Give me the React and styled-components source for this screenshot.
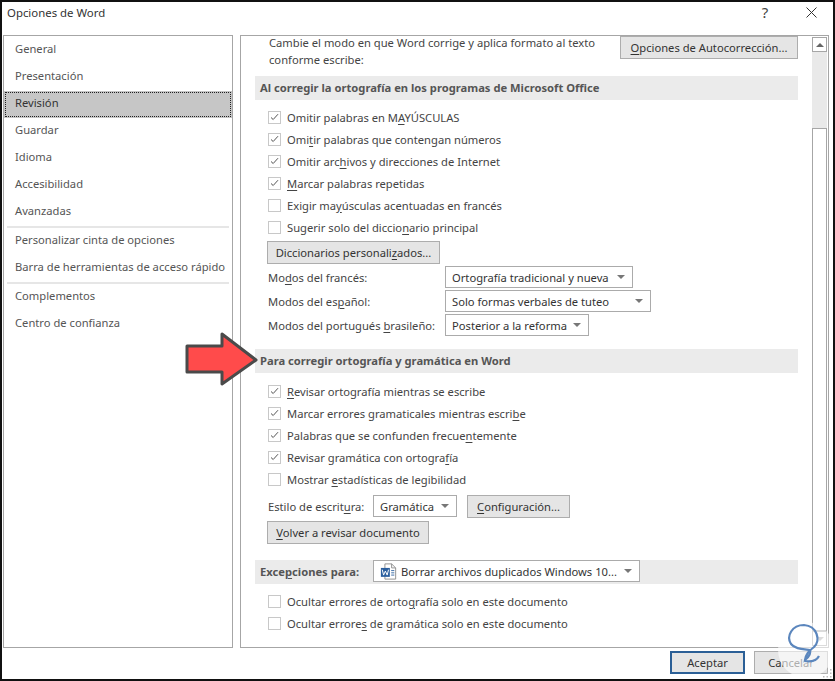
import React from "react";
import styled, { createGlobalStyle } from "styled-components";

const GlobalStyle = createGlobalStyle`
  html, body {
    margin: 0;
    padding: 0;
    background: #fff;
  }
  * {
    box-sizing: border-box;
  }
  u {
    text-underline-offset: 2px;
    text-decoration-thickness: 1px;
  }
`;

const Dialog = styled.div`
  position: relative;
  width: 835px;
  height: 681px;
  overflow: hidden;
  display: flex;
  flex-direction: column;
  background: #fff;
  border: 2px solid #111;
  font-family: "Noto Sans", "Open Sans", sans-serif;
  font-size: 11.2px;
  color: #444;
`;

const TitleBar = styled.div`
  height: 33px;
  flex: none;
  display: flex;
  align-items: center;
  padding: 0 16px 13px 5px;
  color: #333;
  font-size: 11.4px;
`;

const Title = styled.div`
  flex: 1;
`;

const HelpMark = styled.span`
  width: 20px;
  margin-right: 31px;
  text-align: center;
  font-size: 15px;
  color: #444;
`;

const Body = styled.div`
  flex: 1;
  min-height: 0;
  display: flex;
  gap: 7px;
  padding: 0 4px 0 1px;
`;

const Sidebar = styled.nav`
  width: 230px;
  border: 1px solid #a6a6a6;
  padding-top: 1px;
  flex: none;
`;

const NavItem = styled.div`
  height: 27px;
  line-height: 24px;
  padding-left: 11px;
  color: #555;
  white-space: nowrap;
  ${(p) =>
    p.$active &&
    `
    background: #c6c6c6;
    color: #333;
    outline: 1px dotted #222;
    outline-offset: -2px;
  `}
`;

const NavRule = styled.div`
  height: 2px;
  margin: ${(p) => p.$margin};
  background: #e6e6e6;
`;

const Panel = styled.main`
  flex: 1;
  min-width: 0;
  display: flex;
  border: 1px solid #a6a6a6;
  overflow: hidden;
`;

const Content = styled.div`
  flex: 1;
  min-width: 0;
  padding: 0 14px 0 14px;
  overflow: hidden;
`;

const IntroRow = styled.div`
  display: flex;
  justify-content: space-between;
  padding-left: 14px;
  height: 40px;
`;

const IntroText = styled.div`
  display: flex;
  flex-direction: column;
  gap: 4px;
  line-height: 13px;
  white-space: nowrap;
`;

const Button = styled.div`
  display: inline-flex;
  align-items: center;
  justify-content: center;
  height: 23px;
  width: ${(p) => p.$w}px;
  flex: none;
  background: #e5e5e5;
  border: 1px solid #adadad;
  color: #333;
  white-space: nowrap;
`;

const SectionHead = styled.div`
  height: 24px;
  display: flex;
  align-items: center;
  padding: 0 0 2px 5px;
  background: #ebebeb;
  color: #555;
  font-weight: 700;
  margin-top: ${(p) => p.$before || 0}px;
  margin-bottom: ${(p) => p.$after || 0}px;
`;

const CheckRow = styled.label`
  height: 22px;
  display: flex;
  align-items: center;
  gap: 6px;
  padding-left: 13px;
`;

const CheckBox = styled.span`
  width: 13px;
  height: 13px;
  flex: none;
  display: flex;
  align-items: center;
  justify-content: center;
  background: #fff;
  border: 1px solid #c8c8c8;
`;

const FieldRow = styled.div`
  display: flex;
  align-items: center;
  height: 24px;
  padding-left: 13px;
`;

const FieldLabel = styled.span`
  width: ${(p) => p.$w}px;
  flex: none;
  white-space: nowrap;
`;

const HeadLabel = styled.span`
  width: 113px;
  flex: none;
`;

const Select = styled.div`
  width: ${(p) => p.$w}px;
  height: 22px;
  flex: none;
  display: flex;
  align-items: center;
  justify-content: space-between;
  padding: 0 7px 0 6px;
  background: #fff;
  border: 1px solid #ababab;
  color: #333;
  font-weight: 400;
  white-space: nowrap;
`;

const SelectValue = styled.span`
  display: flex;
  align-items: center;
  gap: 4px;
`;

const Caret = styled.span`
  width: 0;
  height: 0;
  border-left: 4px solid transparent;
  border-right: 4px solid transparent;
  border-top: 4px solid #777;
`;

const ButtonRow = styled.div`
  padding-left: 12px;
  margin: ${(p) => p.$margin};
`;

const Group = styled.div`
  margin: ${(p) => p.$margin};
`;

const SideButton = styled(Button)`
  margin-left: 10px;
`;

const ScrollBar = styled.div`
  width: 15px;
  margin: 1px 1px 1px 0;
  flex: none;
  display: flex;
  flex-direction: column;
  background: #e9e9e9;
`;

const ScrollArrow = styled.div`
  height: 15px;
  flex: none;
  display: flex;
  align-items: center;
  justify-content: center;
  background: #fff;
  border: 1px solid #a6a6a6;
`;

const ArrowTip = styled.span`
  width: 0;
  height: 0;
  border-left: 4px solid transparent;
  border-right: 4px solid transparent;
  ${(p) => (p.$up ? "border-bottom: 4px solid #666;" : "border-top: 4px solid #a6a6a6;")}
`;

const ScrollTrack = styled.div`
  flex: 1;
  padding-top: 76px;
  display: flex;
  flex-direction: column;
`;

const ScrollThumb = styled.div`
  flex: 1;
  background: #fff;
  border: 1px solid #a6a6a6;
`;

const Footer = styled.div`
  height: 31px;
  flex: none;
  display: flex;
  justify-content: flex-end;
  gap: 9px;
  padding: 3px 5px 0 0;
`;

const FooterButton = styled(Button)`
  border: ${(p) => (p.$primary ? "2px solid #2b5f96" : "1px solid #adadad")};
`;

const ArrowOverlay = styled.svg`
  position: absolute;
  left: 183px;
  top: 330px;
`;

const WatermarkOverlay = styled.svg`
  position: absolute;
  left: 776px;
  top: 620px;
`;

const Grip = styled.svg`
  position: absolute;
  right: 1px;
  bottom: 1px;
`;

const Check = ({ on }) => (
  <CheckBox>
    {on && (
      <svg width="9" height="8" viewBox="0 0 9 8">
        <path d="M1 4.500 L3.200 6.500 L8 1.200" fill="none" stroke="#555" strokeWidth="1" />
      </svg>
    )}
  </CheckBox>
);

const Option = ({ on, children }) => (
  <CheckRow>
    <Check on={on} />
    <span>{children}</span>
  </CheckRow>
);

const WordDocIcon = () => (
  <svg width="17" height="17" viewBox="0 0 19 18">
    <path d="M5.500 .5 H13 L17.500 5 V17.500 H5.500 Z" fill="#fff" stroke="#888" />
    <path d="M13 .5 V5 H17.500" fill="none" stroke="#888" />
    <rect x="1" y="5" width="10" height="10" fill="#2b5f9e" />
    <path d="M2.500 7 L4 13 L6 8.500 L8 13 L9.500 7" fill="none" stroke="#fff" strokeWidth="1.100" />
    <path d="M12.500 8 H16 M12.500 10.500 H16 M12.500 13 H16" stroke="#2b5f9e" />
  </svg>
);

export default function App() {
  return (
    <Dialog>
      <GlobalStyle />
      <TitleBar>
        <Title>Opciones de Word</Title>
        <HelpMark>?</HelpMark>
        <svg width="11" height="11" viewBox="0 0 11 11">
          <path d="M.5 .5 L10.500 10.500 M10.500 .5 L.5 10.500" stroke="#333" strokeWidth="1" />
        </svg>
      </TitleBar>
      <Body>
        <Sidebar>
          <NavItem>General</NavItem>
          <NavItem>Presentación</NavItem>
          <NavItem $active>Revisión</NavItem>
          <NavItem>Guardar</NavItem>
          <NavItem>Idioma</NavItem>
          <NavItem>Accesibilidad</NavItem>
          <NavItem>Avanzadas</NavItem>
          <NavRule $margin="0 3px 0 3px" />
          <NavItem>Personalizar cinta de opciones</NavItem>
          <NavItem>Barra de herramientas de acceso rápido</NavItem>
          <NavRule $margin="0 3px 0 3px" />
          <NavItem>Complementos</NavItem>
          <NavItem>Centro de confianza</NavItem>
        </Sidebar>
        <Panel>
          <Content>
            <IntroRow>
              <IntroText>
                <span>Cambie el modo en que Word corrige y aplica formato al texto</span>
                <span>conforme escribe:</span>
              </IntroText>
              <Button $w={178}>
                <span>
                  <u>O</u>pciones de Autocorrección...
                </span>
              </Button>
            </IntroRow>
            <SectionHead $after={6}>Al corregir la ortografía en los programas de Microsoft Office</SectionHead>
            <Option on>
              Omitir palabras en M<u>A</u>YÚSCULAS
            </Option>
            <Option on>
              Omi<u>t</u>ir palabras que contengan números
            </Option>
            <Option on>
              Omitir arc<u>h</u>ivos y direcciones de Internet
            </Option>
            <Option on>
              <u>M</u>arcar palabras repetidas
            </Option>
            <Option>
              Exigir ma<u>y</u>úsculas acentuadas en francés
            </Option>
            <Option>
              Sugerir solo del diccio<u>n</u>ario principal
            </Option>
            <ButtonRow $margin="3px 0 1px">
              <Button $w={173}>
                <span>
                  Diccionarios personali<u>z</u>ados...
                </span>
              </Button>
            </ButtonRow>
            <FieldRow>
              <FieldLabel $w={177}>
                Mo<u>d</u>os del francés:
              </FieldLabel>
              <Select $w={188}>
                Ortografía tradicional y nueva
                <Caret />
              </Select>
            </FieldRow>
            <FieldRow>
              <FieldLabel $w={177}>
                Modos del es<u>p</u>añol:
              </FieldLabel>
              <Select $w={206}>
                Solo formas verbales de tuteo
                <Caret />
              </Select>
            </FieldRow>
            <FieldRow>
              <FieldLabel $w={177}>
                Modos del portugués <u>b</u>rasileño:
              </FieldLabel>
              <Select $w={144}>
                Posterior a la reforma
                <Caret />
              </Select>
            </FieldRow>
            <SectionHead $before={12} $after={7}>
              Para corregir ortografía y gramática en Word
            </SectionHead>
            <Option on>
              <u>R</u>evisar ortografía mientras se escribe
            </Option>
            <Option on>
              Marcar errores gramaticales mientras escri<u>b</u>e
            </Option>
            <Option on>
              Palabras que se confunden frecue<u>n</u>temente
            </Option>
            <Option on>
              Revisar gramática con ortogra<u>f</u>ía
            </Option>
            <Option>
              Mostrar <u>e</u>stadísticas de legibilidad
            </Option>
            <Group $margin="4px 0 0">
              <FieldRow>
                <FieldLabel $w={105}>
                  Estilo de escrit<u>u</u>ra:
                </FieldLabel>
                <Select $w={84}>
                  Gramática
                  <Caret />
                </Select>
                <SideButton $w={103}>
                  <span>
                    <u>C</u>onfiguración...
                  </span>
                </SideButton>
              </FieldRow>
            </Group>
            <ButtonRow $margin="3px 0 16px">
              <Button $w={162}>
                <span>
                  <u>V</u>olver a revisar documento
                </span>
              </Button>
            </ButtonRow>
            <SectionHead $after={6}>
              <HeadLabel>
                Exce<u>p</u>ciones para:
              </HeadLabel>
              <Select $w={267}>
                <SelectValue>
                  <WordDocIcon />
                  Borrar archivos duplicados Windows 10...
                </SelectValue>
                <Caret />
              </Select>
            </SectionHead>
            <Option>
              Ocultar errores de orto<u>g</u>rafía solo en este documento
            </Option>
            <Option>
              Ocultar errore<u>s</u> de gramática solo en este documento
            </Option>
          </Content>
          <ScrollBar>
            <ScrollArrow>
              <ArrowTip $up />
            </ScrollArrow>
            <ScrollTrack>
              <ScrollThumb />
            </ScrollTrack>
            <ScrollArrow>
              <ArrowTip />
            </ScrollArrow>
          </ScrollBar>
        </Panel>
      </Body>
      <Footer>
        <FooterButton $w={75} $primary>
          Aceptar
        </FooterButton>
        <FooterButton $w={74}>Cancelar</FooterButton>
      </Footer>
      <ArrowOverlay width="76" height="54" viewBox="0 0 76 54">
        <path
          d="M2 14 H37 V2 L71 28 L37 52 V40 H2 Z"
          fill="#ff4b4b"
          stroke="#4a4a4a"
          strokeWidth="3"
          strokeLinejoin="round"
        />
      </ArrowOverlay>
      <WatermarkOverlay width="56" height="58" viewBox="0 0 56 58">
        <circle cx="28" cy="28" r="28" fill="#fff" fillOpacity="0.6" />
        <path
          d="M27 38 C28 32 30 30 36 25 C43 18 39 4 26 3 C14 3 8 14 13 22 C17 27 24 27 32 28 C33 31 32 34 27 38 Z M27 39 C34 40 39 38 41 34"
          fill="none"
          stroke="#5b86bd"
          strokeWidth="2.200"
        />
      </WatermarkOverlay>
      <Grip width="10" height="10" viewBox="0 0 10 10">
        <path d="M8 1h1.500v1.500H8zM4.500 4.500h1.500v1.500H4.500zM8 4.500h1.500v1.500H8zM1 8h1.500v1.500H1zM4.500 8h1.500v1.500H4.500zM8 8h1.500v1.500H8z" fill="#bbb" />
      </Grip>
    </Dialog>
  );
}
